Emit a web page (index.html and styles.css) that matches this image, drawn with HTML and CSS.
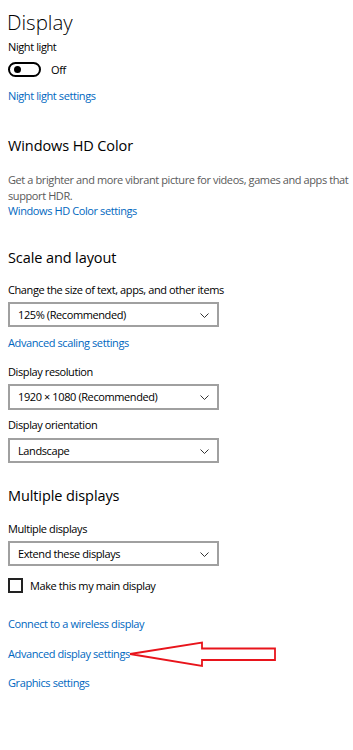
FILE: index.html
```html
<!DOCTYPE html>
<html lang="en">
<head>
    <meta charset="UTF-8">
    <title>Display</title>
    <link rel="stylesheet" href="styles.css">
</head>
<body>
<div class="page">
    <h1 class="title">Display</h1>
    <div class="label">Night light</div>
    <div class="toggle-row">
        <span class="toggle"><span class="knob"></span></span>
        <span class="toggle-text">Off</span>
    </div>
    <a class="link first-link">Night light settings</a>

    <h2 class="heading hd">Windows HD Color</h2>
    <p class="desc">Get a brighter and more vibrant picture for videos, games and apps that support HDR.</p>
    <a class="link hd-link">Windows HD Color settings</a>

    <h2 class="heading scale">Scale and layout</h2>
    <div class="label gap14">Change the size of text, apps, and other items</div>
    <div class="select">125% (Recommended)<svg class="chev" width="9" height="5" viewBox="0 0 9 5"><path d="M0.5 0.5 L4.5 4.5 L8.5 0.5" fill="none" stroke="#333" stroke-width="1"/></svg></div>
    <a class="link gap8">Advanced scaling settings</a>
    <div class="label gap13">Display resolution</div>
    <div class="select tall">1920 × 1080 (Recommended)<svg class="chev" width="9" height="5" viewBox="0 0 9 5"><path d="M0.5 0.5 L4.5 4.5 L8.5 0.5" fill="none" stroke="#333" stroke-width="1"/></svg></div>
    <div class="label gap7">Display orientation</div>
    <div class="select gap5">Landscape<svg class="chev" width="9" height="5" viewBox="0 0 9 5"><path d="M0.5 0.5 L4.5 4.5 L8.5 0.5" fill="none" stroke="#333" stroke-width="1"/></svg></div>

    <h2 class="heading multi">Multiple displays</h2>
    <div class="label gap15">Multiple displays</div>
    <div class="select">Extend these displays<svg class="chev" width="9" height="5" viewBox="0 0 9 5"><path d="M0.5 0.5 L4.5 4.5 L8.5 0.5" fill="none" stroke="#333" stroke-width="1"/></svg></div>
    <div class="check-row">
        <span class="box"></span>
        <span>Make this my main display</span>
    </div>

    <a class="link gap23">Connect to a wireless display</a>
    <a class="link gap14">Advanced display settings</a>
    <a class="link gap13">Graphics settings</a>

    <svg class="arrow" width="353" height="750" viewBox="0 0 353 750">
        <polygon points="130,654 202,642.5 202,648.5 275,648.5 275,660 202,660 202,666" fill="none" stroke="#e8141b" stroke-width="1.8" stroke-linejoin="miter"/>
    </svg>
</div>
</body>
</html>
```

FILE: styles.css
```css
* {
    margin: 0;
    padding: 0;
}

body {
    background: #fff;
    font-family: "Open Sans", "Noto Sans", sans-serif;
    font-size: 11px;
    letter-spacing: -0.4px;
    color: #000;
}

.page {
    position: relative;
    padding: 8px 0 0 8px;
    height: 742px;
}

.title {
    font-size: 20.5px;
    font-weight: 300;
    line-height: 28px;
    letter-spacing: 0;
    margin-left: -1px;
}

.label {
    line-height: 16px;
    margin-top: 3px;
}

.toggle-row {
    display: flex;
    align-items: center;
    height: 15px;
    margin-top: 7px;
}
.toggle {
    width: 25px;
    height: 11px;
    border: 2px solid #000;
    border-radius: 8px;
    display: flex;
    align-items: center;
    padding-left: 4px;
}
.knob {
    width: 7px;
    height: 7px;
    border-radius: 50%;
    background: #000;
}
.toggle-text {
    margin-left: 10px;
}

.link {
    display: block;
    color: #0067c0;
    line-height: 16px;
}
.first-link {
    margin-top: 11px;
}

.heading {
    font-size: 14.5px;
    font-weight: 400;
    line-height: 20px;
    letter-spacing: -0.1px;
}
.hd { margin-top: 32px; }
.scale { margin-top: 30px; }
.multi { margin-top: 23px; }

.desc {
    color: #5a5a5a;
    line-height: 16px;
    margin-top: 16px;
}
.hd-link {
    line-height: 14px;
}

.select {
    position: relative;
    width: 199px;
    height: 21px;
    border: 2px solid #a0a0a0;
    margin-top: 4px;
    line-height: 21px;
    padding-left: 8px;
}
.select.tall {
    height: 22px;
    line-height: 22px;
}
.chev {
    position: absolute;
    right: 8px;
    top: 50%;
    margin-top: -2px;
}

.gap5 { margin-top: 5px; }
.gap7 { margin-top: 7px; }
.gap8 { margin-top: 8px; }
.gap13 { margin-top: 13px; }
.gap14 { margin-top: 14px; }
.gap15 { margin-top: 15px; }
.gap23 { margin-top: 23px; }

.check-row {
    display: flex;
    align-items: center;
    height: 16px;
    margin-top: 11px;
}
.box {
    width: 11px;
    height: 11px;
    border: 2px solid #222;
    margin-right: 7px;
}

.arrow {
    position: absolute;
    left: 0;
    top: 0;
    pointer-events: none;
}
```
